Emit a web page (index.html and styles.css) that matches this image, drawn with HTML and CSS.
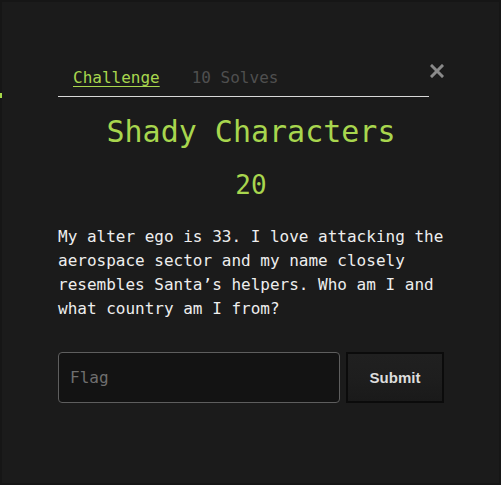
FILE: index.html
```html
<!DOCTYPE html>
<html>
<head>
<meta charset="utf-8">
<link rel="stylesheet" href="styles.css">
</head>
<body>
<div class="frame">
  <span class="edge-mark"></span>
  <div class="modal">
    <div class="top">
      <nav class="tabs">
        <a class="tab active">Challenge</a>
        <a class="tab">10 Solves</a>
      </nav>
      <button class="close" aria-label="Close">
        <svg width="14" height="14" viewBox="0 0 14 14"><path d="M2 2 L12 12 M12 2 L2 12" stroke="#8a8a8a" stroke-width="3" stroke-linecap="square"/></svg>
      </button>
    </div>
    <h1 class="title">Shady Characters</h1>
    <div class="points">20</div>
    <p class="desc">My alter ego is 33. I love attacking the aerospace sector and my name closely resembles Santa’s helpers. Who am I and what country am I from?</p>
    <form class="flag-form">
      <input class="flag-input" type="text" placeholder="Flag">
      <button class="submit" type="button">Submit</button>
    </form>
  </div>
</div>
</body>
</html>
```

FILE: styles.css
```css
html, body {
  margin: 0;
  padding: 0;
  background: #151515;
}
.frame {
  position: relative;
  box-sizing: border-box;
  width: 501px;
  height: 485px;
  border: 2px solid #161616;
  background: #1b1b1b;
  font-family: "DejaVu Sans Mono", "Liberation Mono", monospace;
}
.edge-mark {
  position: absolute;
  left: -2px;
  top: 91px;
  width: 2px;
  height: 5px;
  background: #a6d84a;
}
.modal {
  width: 386px;
  margin-left: 56px;
  padding-top: 58px;
}
.top {
  display: flex;
  align-items: flex-start;
}
.tabs {
  width: 371px;
  display: flex;
  gap: 32px;
  padding: 7px 0 7px 15px;
  box-sizing: border-box;
  border-bottom: 1px solid #d8d8d8;
}
.tab {
  font-size: 16px;
  line-height: 22px;
  color: #4f4f4f;
}
.tab.active {
  color: #a8d64e;
  text-decoration: underline;
  text-underline-offset: 3px;
}
.close {
  margin-left: auto;
  margin-top: 4px;
  margin-right: 0;
  padding: 0;
  border: 0;
  background: none;
  width: 14px;
  height: 14px;
  display: flex;
}
.title {
  margin: 17px 0 0;
  text-align: center;
  font-weight: normal;
  font-size: 30px;
  line-height: 36px;
  color: #a8d64e;
}
.points {
  margin-top: 20px;
  text-align: center;
  font-size: 26px;
  line-height: 30px;
  color: #a8d64e;
}
.desc {
  margin: 25px 0 0;
  font-size: 16px;
  line-height: 24px;
  color: #eeeeee;
}
.flag-form {
  display: flex;
  gap: 6px;
  margin-top: 31px;
}
.flag-input {
  box-sizing: border-box;
  width: 282px;
  height: 51px;
  border: 1px solid #5e5e5e;
  border-radius: 4px;
  background: #131313;
  padding: 0 11px;
  font-family: "DejaVu Sans Mono", "Liberation Mono", monospace;
  font-size: 16px;
  color: #eee;
}
.flag-input::placeholder {
  color: #6f6f6f;
}
.submit {
  box-sizing: border-box;
  width: 98px;
  height: 51px;
  border: 2px solid #0b0b0b;
  background: linear-gradient(#202020 0%, #1e1e1e 50%, #1a1a1a 100%);
  font-family: "Liberation Sans", Arial, sans-serif;
  font-weight: bold;
  font-size: 15px;
  color: #dddddd;
}
```
